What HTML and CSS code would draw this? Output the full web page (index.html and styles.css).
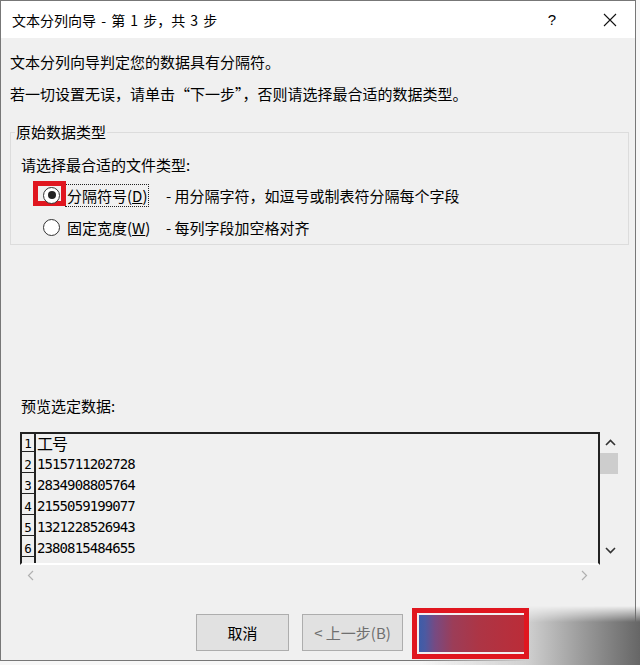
FILE: index.html
```html
<!DOCTYPE html>
<html lang="zh-CN">
<head>
    <meta charset="UTF-8">
    <title>文本分列向导</title>
    <link rel="stylesheet" href="styles.css">
</head>
<body>
    <div class="window">
        <div class="titlebar">
            <span class="title">文本分列向导 - 第 1 步，共 3 步</span>
            <span class="help">?</span>
            <span class="close">
                <svg width="14" height="14" viewBox="0 0 14 14"><path d="M1 1 L13 13 M13 1 L1 13" stroke="#111" stroke-width="1.1" fill="none"/></svg>
            </span>
        </div>

        <div class="content">
            <p class="intro first">文本分列向导判定您的数据具有分隔符。</p>
            <p class="intro">若一切设置无误，请单击“下一步”，否则请选择最合适的数据类型。</p>

            <fieldset class="group">
                <legend>原始数据类型</legend>
                <div class="group-body">
                    <div class="prompt">请选择最合适的文件类型:</div>
                    <div class="option">
                        <span class="mark-box"></span>
                        <span class="radio checked"><span class="dot"></span></span>
                        <span class="name"><span class="focus">分隔符号(<u>D</u>)</span></span>
                        <span class="desc">- 用分隔字符，如逗号或制表符分隔每个字段</span>
                    </div>
                    <div class="option second">
                        <span class="radio"></span>
                        <span class="name"><span class="nofocus">固定宽度(<u>W</u>)</span></span>
                        <span class="desc">- 每列字段加空格对齐</span>
                    </div>
                </div>
            </fieldset>

            <div class="preview-label">预览选定数据:</div>

            <div class="preview">
                <div class="preview-main">
                    <div class="grid">
                        <div class="row head"><span class="num">1</span><span class="cell cjk">工号</span></div>
                        <div class="row"><span class="num">2</span><span class="cell">1515711202728</span></div>
                        <div class="row"><span class="num">3</span><span class="cell">2834908805764</span></div>
                        <div class="row"><span class="num">4</span><span class="cell">2155059199077</span></div>
                        <div class="row"><span class="num">5</span><span class="cell">1321228526943</span></div>
                        <div class="row"><span class="num">6</span><span class="cell">2380815484655</span></div>
                        <div class="row tail"><span class="num"></span></div>
                    </div>
                    <div class="vscroll">
                        <span class="arrow">
                            <svg width="11" height="7" viewBox="0 0 11 7"><path d="M1 6 L5.5 1.5 L10 6" stroke="#333" stroke-width="1.6" fill="none"/></svg>
                        </span>
                        <span class="thumb"></span>
                        <span class="track"></span>
                        <span class="arrow down">
                            <svg width="11" height="7" viewBox="0 0 11 7"><path d="M1 1 L5.5 5.5 L10 1" stroke="#333" stroke-width="1.6" fill="none"/></svg>
                        </span>
                    </div>
                </div>
                <div class="hscroll">
                    <svg width="7" height="11" viewBox="0 0 7 11"><path d="M6 1 L1.5 5.5 L6 10" stroke="#b0b0b0" stroke-width="1.2" fill="none"/></svg>
                    <svg width="7" height="11" viewBox="0 0 7 11"><path d="M1 1 L5.5 5.5 L1 10" stroke="#b0b0b0" stroke-width="1.2" fill="none"/></svg>
                </div>
            </div>

            <div class="buttons">
                <span class="button">取消</span>
                <span class="button prev">&lt; 上一步(B)</span>
                <span class="button next"></span>
            </div>
        </div>
    </div>
    <div class="smudge"></div>
</body>
</html>
```

FILE: styles.css
```css
body {
    margin: 0;
    background: #f7f7f7;
    font-family: "Noto Sans CJK SC", "Microsoft YaHei", sans-serif;
    font-size: 15px;
    color: #000;
}
.window {
    width: 634px;
    height: 659px;
    border: 1px solid #777;
    background: #f0f0f0;
    position: relative;
}
.titlebar {
    height: 37px;
    background: #fff;
    display: flex;
    align-items: center;
    padding: 0 2px 0 11px;
}
.title {
    font-size: 14px;
    word-spacing: 2px;
    flex: 1;
}
.help {
    width: 30px;
    text-align: center;
    font-family: "Liberation Sans", sans-serif;
    font-size: 15px;
}
.close {
    width: 46px;
    margin-left: 20px;
    display: flex;
    justify-content: center;
}
.content {
    padding: 0 6px 0 9px;
}
.intro {
    margin: 12px 0 0;
    line-height: 20px;
}
.intro.first {
    margin-top: 14px;
}

/* group box */
.group {
    margin: 18px 0 0;
    padding: 0 0 7px;
    border: 1px solid #dcdcdc;
    min-width: 0;
}
.group legend {
    margin-left: 4px;
    padding: 0 1px;
    line-height: 20px;
}
.group-body {
    padding-left: 10px;
}
.prompt {
    margin-top: 13px;
    line-height: 20px;
}
.option {
    position: relative;
    display: flex;
    align-items: center;
    height: 20px;
    margin-top: 10px;
}
.option.second {
    margin-top: 12px;
}
.mark-box {
    position: absolute;
    left: 12px;
    top: -4px;
    width: 23px;
    height: 15px;
    border: 5px solid #e0161f;
}
.radio {
    position: relative;
    width: 15px;
    height: 15px;
    margin-left: 22px;
    border: 1px solid #333;
    border-radius: 50%;
    background: #fff;
    display: flex;
    align-items: center;
    justify-content: center;
}
.radio .dot {
    width: 8px;
    height: 8px;
    border-radius: 50%;
    background: #222;
}
.name {
    width: 101px;
    margin-left: 5px;
}
.focus, .nofocus {
    display: inline-block;
    line-height: 21px;
    padding: 0 1px;
    border: 1px dotted #222;
}
.nofocus {
    border-color: transparent;
}

/* preview */
.preview-label {
    margin-top: 151px;
    padding-left: 11px;
    line-height: 20px;
}
.preview {
    margin: 16px 0 0 10px;
    width: 600px;
}
.preview-main {
    display: flex;
    height: 133px;
}
.grid {
    width: 576px;
    border-top: 2px solid #222;
    border-left: 2px solid #222;
    border-right: 2px solid #222;
    border-bottom: 2px solid #fff;
    overflow: hidden;
}
.row {
    display: flex;
    height: 21px;
}
.row.head {
    height: 18px;
}
.num {
    width: 12px;
    border-right: 2px solid #222;
    border-bottom: 1px solid #222;
    font-family: "DejaVu Sans Mono", monospace;
    font-size: 12.5px;
    line-height: 12px;
    display: flex;
    align-items: flex-end;
    justify-content: center;
    padding-bottom: 1px;
}
.row.tail .num {
    border-bottom: none;
}
.cell {
    font-family: "DejaVu Sans Mono", monospace;
    font-size: 14px;
    letter-spacing: -0.9px;
    line-height: 20px;
    padding-top: 2px;
    padding-left: 1px;
}
.cell.cjk {
    font-family: "Noto Sans CJK SC", sans-serif;
    font-size: 16px;
    letter-spacing: -1px;
    line-height: 17px;
    padding-top: 1px;
}
.vscroll {
    width: 20px;
    display: flex;
    flex-direction: column;
    align-items: center;
}
.arrow {
    height: 21px;
    display: flex;
    align-items: center;
    justify-content: center;
}
.arrow.down {
    margin-bottom: 4px;
}
.thumb {
    width: 18px;
    height: 21px;
    margin-left: -2px;
    background: #cdcdcd;
}
.track {
    flex: 1;
}
.hscroll {
    width: 576px;
    height: 20px;
    display: flex;
    align-items: center;
    justify-content: space-between;
    padding: 0 8px 0 7px;
    box-sizing: border-box;
}

/* buttons */
.buttons {
    display: flex;
    align-items: flex-start;
    margin: 29px 0 0 186px;
}
.button {
    width: 91px;
    height: 35px;
    border: 1px solid #adadad;
    background: #e1e1e1;
    display: flex;
    align-items: center;
    justify-content: center;
}
.button.prev {
    width: 99px;
    margin-left: 13px;
    color: #6f6f6f;
}
.button.next {
    position: relative;
    z-index: 2;
    width: 105px;
    height: 37px;
    margin: -1px 0 0 14px;
    border: 2px solid #f2eef0;
    border-right: none;
    outline: 5px solid #e0161f;
    background: linear-gradient(90deg, #3d5ca8 0px, #4b5aa2 6px, #774a82 16px, #9c3d58 34px, #ad3545 60px, #bb2c38 100%);
}

/* blurred watermark over the bottom corner */
.smudge {
    position: absolute;
    left: 418px;
    top: 606px;
    width: 222px;
    height: 59px;
    z-index: 1;
    background: linear-gradient(90deg, rgba(225, 225, 225, 0) 0px, #cfcfcf 110px, #9a9a9a 165px, #666 222px);
    -webkit-mask-image: linear-gradient(180deg, transparent 0px, #000 16px);
    mask-image: linear-gradient(180deg, transparent 0px, #000 16px);
}
```
